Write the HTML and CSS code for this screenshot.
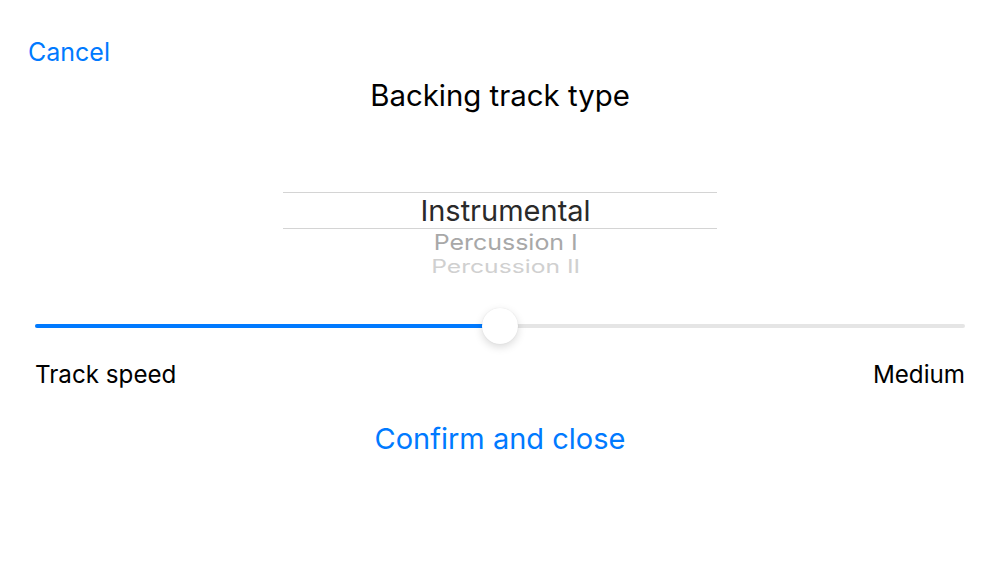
FILE: index.html
```html
<!DOCTYPE html>
<html>
<head>
<meta charset="utf-8">
<link rel="stylesheet" href="styles.css">
</head>
<body>
<div class="screen">
  <div class="topbar"><span class="cancel">Cancel</span></div>
  <h1 class="title">Backing track type</h1>
  <div class="picker">
    <div class="row selected">Instrumental</div>
    <div class="row next"><span>Percussion I</span></div>
    <div class="row far"><span>Percussion II</span></div>
  </div>
  <div class="slider">
    <div class="track"><div class="fill"></div><div class="thumb"></div></div>
  </div>
  <div class="labels"><span>Track speed</span><span>Medium</span></div>
  <div class="confirm">Confirm and close</div>
</div>
</body>
</html>
```
FILE: styles.css
```css
html, body {
  margin: 0;
  padding: 0;
  background: #ffffff;
}
.screen {
  width: 1000px;
  height: 563px;
  font-family: "Inter", "Liberation Sans", sans-serif;
  color: #000;
  display: flex;
  flex-direction: column;
  overflow: hidden;
}
.topbar {
  padding: 37px 0 0 28px;
  height: 30px;
}
.cancel {
  font-size: 25px;
  line-height: 30px;
  color: #007aff;
}
.title {
  margin: 11px 0 0;
  font-size: 29.4px;
  line-height: 36px;
  font-weight: 400;
  text-align: center;
}
.picker {
  margin: 78px auto 0;
  width: 434px;
  display: flex;
  flex-direction: column;
  align-items: center;
  height: 84px;
  overflow: hidden;
}
.row {
  width: 100%;
  box-sizing: border-box;
  padding-left: 11px;
  text-align: center;
  font-size: 29px;
}
.row span {
  display: inline-block;
}
.selected {
  height: 37px;
  line-height: 35px;
  border-top: 1px solid #d4d4d4;
  border-bottom: 1px solid #d4d4d4;
  color: #2a2a2a;
}
.next {
  height: 26px;
  line-height: 26px;
  color: #a8a8a8;
}
.next span {
  transform: scale(0.86, 0.76);
}
.far {
  height: 21px;
  line-height: 30px;
  color: #d0d0d0;
  overflow: hidden;
}
.far span {
  margin-top: 2px;
  transform: scale(0.85, 0.62);
  transform-origin: 50% 0;
}
.slider {
  margin-top: 48px;
  padding: 0 35px;
  height: 4px;
}
.track {
  position: relative;
  height: 4px;
  border-radius: 2px;
  background: #e5e5e5;
}
.fill {
  width: 50%;
  height: 4px;
  border-radius: 2px;
  background: #007aff;
}
.thumb {
  position: absolute;
  left: calc(50% - 18px);
  top: -16px;
  width: 36px;
  height: 36px;
  border-radius: 50%;
  background: #fff;
  box-shadow: 0 3px 8px rgba(0,0,0,0.15), 0 0 1px rgba(0,0,0,0.12);
}
.labels {
  display: flex;
  justify-content: space-between;
  padding: 0 35px;
  margin-top: 32px;
  font-size: 24.2px;
  line-height: 30px;
}
.confirm {
  margin-top: 32px;
  text-align: center;
  font-size: 29px;
  line-height: 34px;
  color: #007aff;
}
```
